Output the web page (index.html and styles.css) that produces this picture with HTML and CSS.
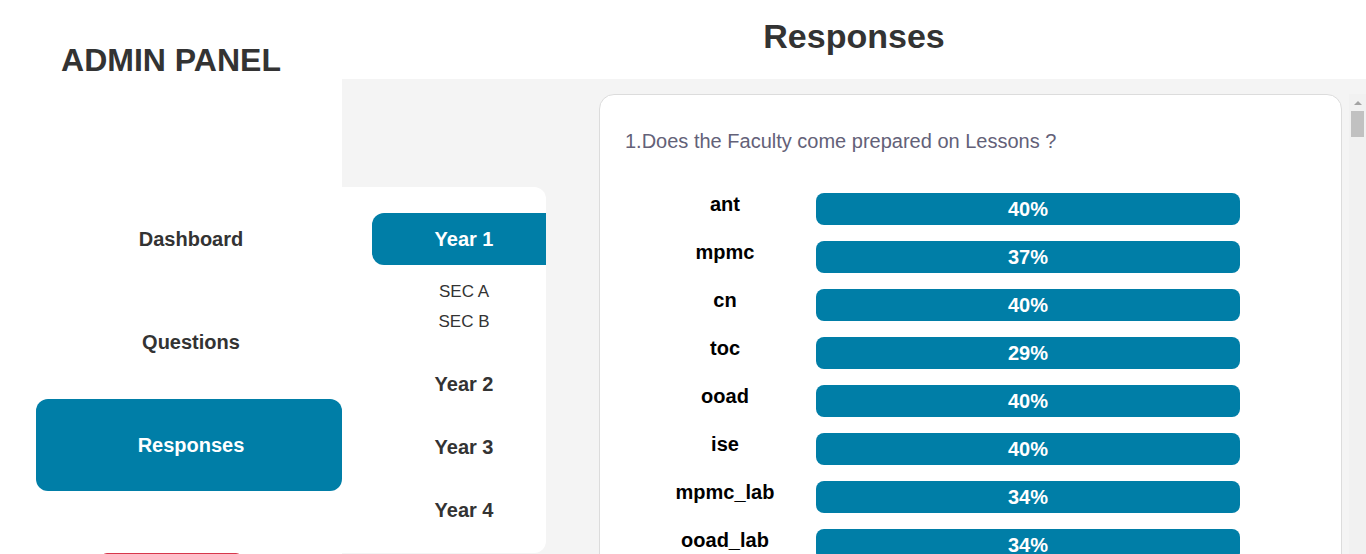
FILE: index.html
```html
<!DOCTYPE html>
<html lang="en">
<head>
<meta charset="utf-8">
<title>Admin Panel - Responses</title>
<link rel="stylesheet" href="styles.css">
</head>
<body>
<div class="app">
  <aside class="sidebar">
    <h1 class="brand">ADMIN PANEL</h1>
    <nav class="nav">
      <a class="nav-item" href="#">Dashboard</a>
      <a class="nav-item" href="#">Questions</a>
      <a class="nav-item active" href="#">Responses</a>
    </nav>
    <button class="logout" type="button">Logout</button>
  </aside>
  <main class="main">
    <header class="topbar">
      <h2 class="page-title">Responses</h2>
    </header>
    <div class="body">
      <div class="years">
        <div class="year active">Year 1</div>
        <ul class="sections">
          <li>SEC A</li>
          <li>SEC B</li>
        </ul>
        <div class="year">Year 2</div>
        <div class="year">Year 3</div>
        <div class="year last">Year 4</div>
      </div>
      <div class="content">
        <section class="card">
          <p class="question">1.Does the Faculty come prepared on Lessons ?</p>
          <div class="row"><span class="label">ant</span><span class="bar">40%</span></div>
          <div class="row"><span class="label">mpmc</span><span class="bar">37%</span></div>
          <div class="row"><span class="label">cn</span><span class="bar">40%</span></div>
          <div class="row"><span class="label">toc</span><span class="bar">29%</span></div>
          <div class="row"><span class="label">ooad</span><span class="bar">40%</span></div>
          <div class="row"><span class="label">ise</span><span class="bar">40%</span></div>
          <div class="row"><span class="label">mpmc_lab</span><span class="bar">34%</span></div>
          <div class="row"><span class="label">ooad_lab</span><span class="bar">34%</span></div>
        </section>
      </div>
      <div class="scrollbar" aria-hidden="true">
        <div class="scroll-arrow"></div>
        <div class="scroll-thumb"></div>
      </div>
    </div>
  </main>
</div>
</body>
</html>
```

FILE: styles.css
```css
* {
  box-sizing: border-box;
}

html, body {
  margin: 0;
  padding: 0;
  overflow: hidden;
  background: #ffffff;
  font-family: "Liberation Sans", Arial, sans-serif;
  color: #333333;
}

.app {
  display: flex;
  height: 640px;
}

/* ---------- Sidebar ---------- */
.sidebar {
  flex: none;
  width: 342px;
  background: #ffffff;
  padding-top: 42px;
  display: flex;
  flex-direction: column;
}

.brand {
  margin: 0;
  text-align: center;
  font-size: 32px;
  line-height: 37px;
  font-weight: 700;
  color: #333333;
}

.nav {
  margin-top: 114px;
  padding-left: 36px;
  display: flex;
  flex-direction: column;
  gap: 11px;
}

.nav-item {
  height: 92px;
  display: flex;
  align-items: center;
  justify-content: center;
  padding-left: 4px;
  font-size: 20px;
  font-weight: 700;
  color: #333333;
  text-decoration: none;
  border-radius: 12px;
}

.nav-item.active {
  background: #007ea7;
  color: #ffffff;
}

.logout {
  margin: 62px auto 0;
  width: 141px;
  height: 48px;
  border: none;
  border-radius: 6px;
  background: #d7374b;
  color: #ffffff;
  font-family: inherit;
  font-size: 18px;
  font-weight: 700;
}

/* ---------- Main ---------- */
.main {
  flex: 1;
  min-width: 0;
  display: flex;
  flex-direction: column;
}

.topbar {
  flex: none;
  height: 79px;
  background: #ffffff;
  padding-top: 17px;
  text-align: center;
}

.page-title {
  margin: 0;
  font-size: 34px;
  line-height: 39px;
  font-weight: 700;
  color: #333333;
}

.body {
  flex: 1;
  min-height: 0;
  display: flex;
  align-items: flex-start;
  background: #f4f4f4;
  padding-top: 15px;
}

/* ---------- Year panel ---------- */
.years {
  flex: none;
  width: 204px;
  margin-top: 93px;
  padding: 26px 0 17px 30px;
  background: #ffffff;
  border-radius: 0 12px 12px 0;
}

.year {
  height: 52px;
  margin-bottom: 11px;
  padding-left: 10px;
  display: flex;
  align-items: center;
  justify-content: center;
  font-size: 20px;
  font-weight: 700;
  color: #333333;
}

.year.last {
  margin-bottom: 0;
}

.year.active {
  background: #007ea7;
  color: #ffffff;
  border-radius: 12px 0 0 12px;
}

.sections {
  list-style: none;
  margin: 0 0 11px;
  padding: 1px 0 10px 10px;
}

.sections li {
  height: 30px;
  line-height: 30px;
  text-align: center;
  font-size: 17px;
  color: #333333;
}

/* ---------- Responses list ---------- */
.content {
  flex: 1;
  align-self: stretch;
  min-width: 0;
  min-height: 0;
  overflow: hidden;
  padding: 0 7px 20px 53px;
}

.card {
  background: #ffffff;
  border: 1px solid #dcdcdc;
  border-radius: 15px;
  padding: 35px 26px 40px 25px;
  margin-bottom: 20px;
}

.question {
  margin: 0 0 40px;
  font-size: 20px;
  line-height: 23px;
  color: #636178;
}

.row {
  display: flex;
  align-items: flex-start;
  height: 32px;
  margin-bottom: 16px;
  padding-left: 9px;
}

.row:last-child {
  margin-bottom: 0;
}

.label {
  flex: none;
  width: 182px;
  text-align: center;
  font-size: 20px;
  line-height: 23px;
  font-weight: 700;
  color: #000000;
}

.bar {
  flex: none;
  width: 424px;
  height: 32px;
  border-radius: 8px;
  background: #007ea7;
  color: #ffffff;
  font-size: 20px;
  font-weight: 700;
  line-height: 32px;
  text-align: center;
}

/* ---------- Scrollbar of the list ---------- */
.scrollbar {
  flex: none;
  width: 17px;
  align-self: stretch;
  background: #f1f1f1;
  display: flex;
  flex-direction: column;
  align-items: center;
}

.scroll-arrow {
  width: 17px;
  height: 17px;
  display: flex;
  align-items: center;
  justify-content: center;
}

.scroll-arrow::before {
  content: "";
  width: 0;
  height: 0;
  border-left: 4px solid transparent;
  border-right: 4px solid transparent;
  border-bottom: 4px solid #a3a3a3;
}

.scroll-thumb {
  width: 13px;
  height: 26px;
  background: #c1c1c1;
}
```
